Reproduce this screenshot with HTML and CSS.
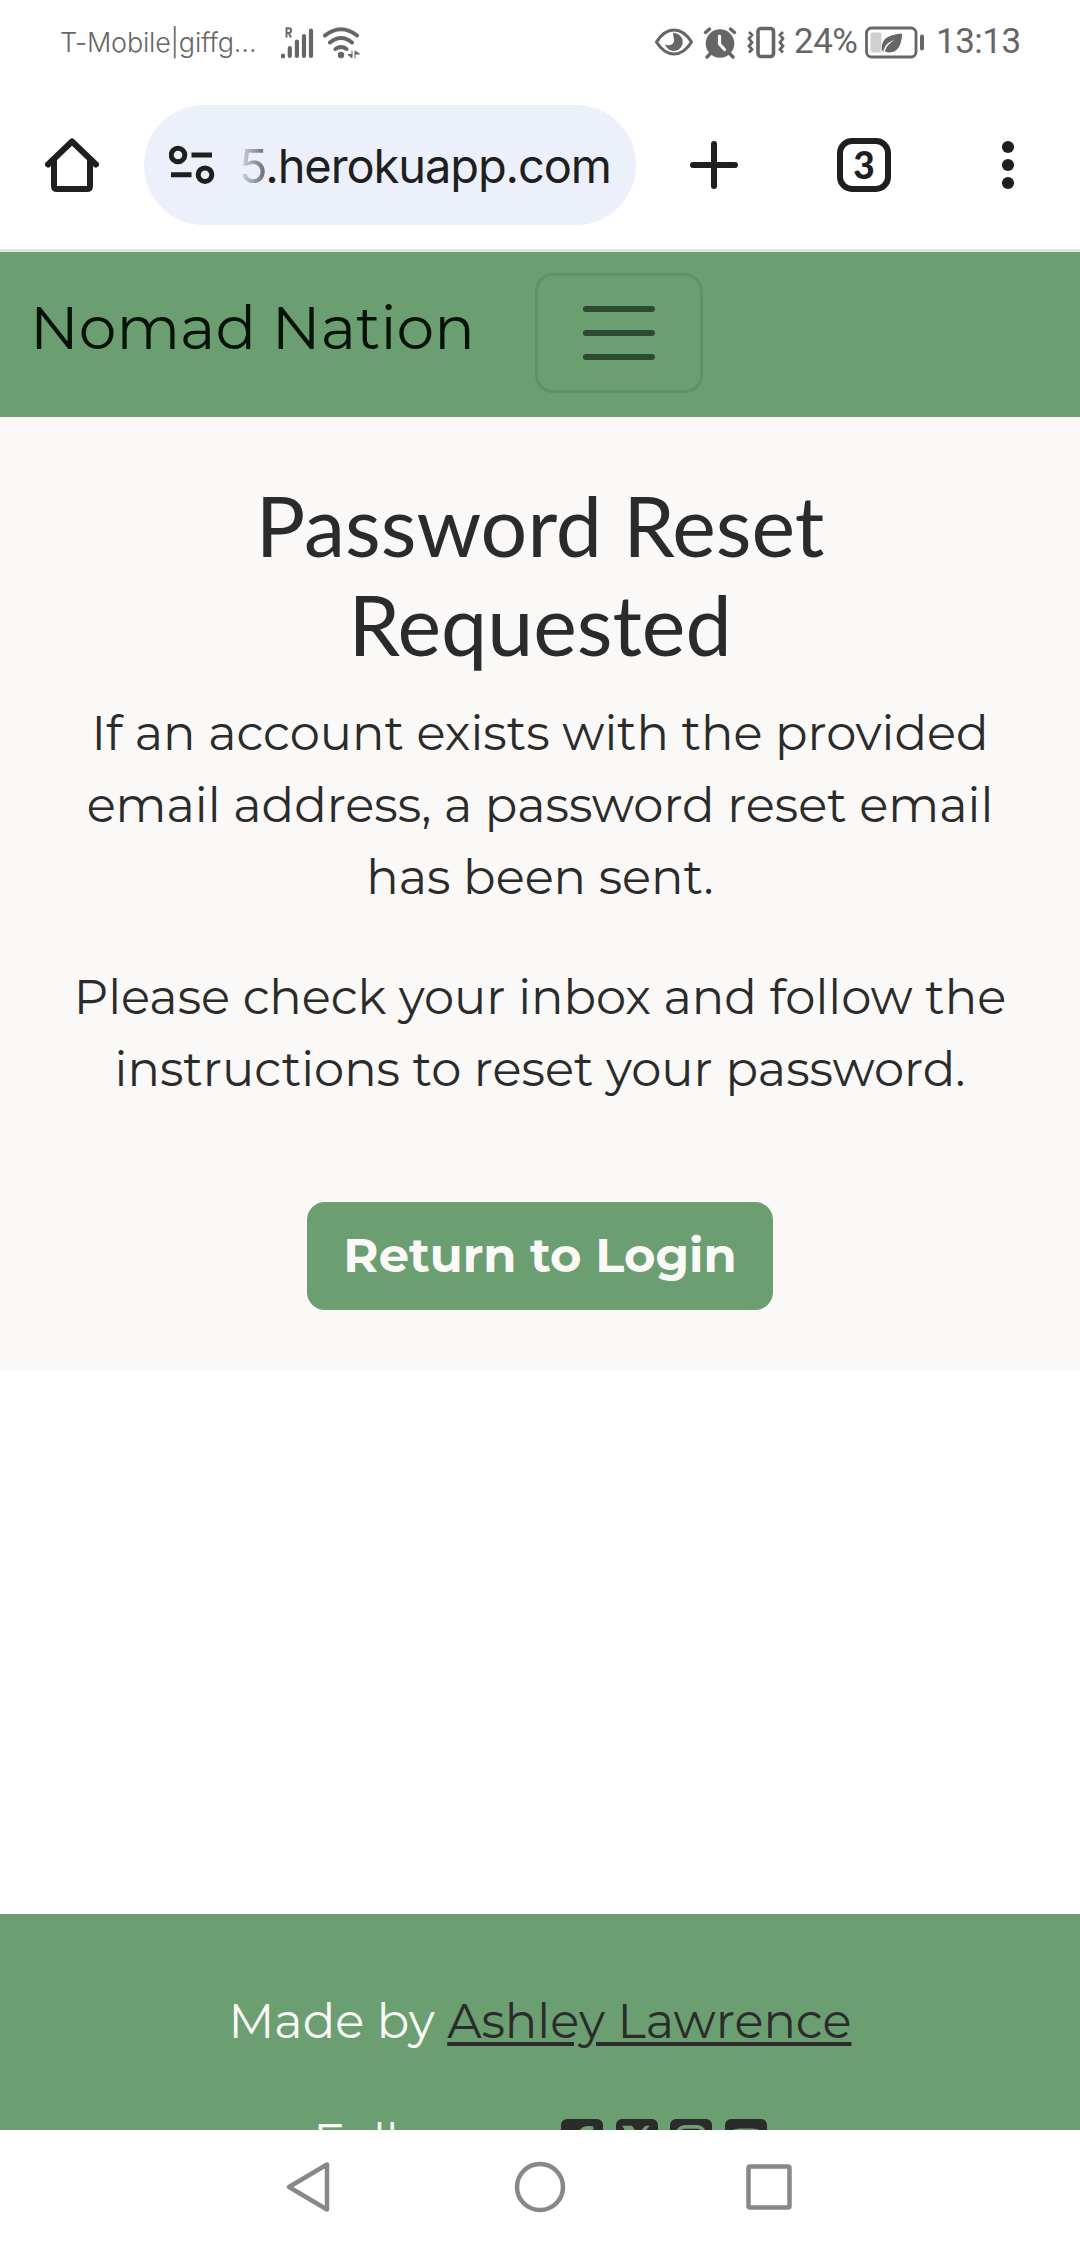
FILE: index.html
```
<!DOCTYPE html>
<html lang="en">
<head>
<meta charset="utf-8">
<title>Nomad Nation</title>
<link rel="stylesheet" href="styles.css">
</head>
<body>
<div class="phone">
  <div class="status">
    <span class="carrier">T-Mobile|giffg…</span>
    <svg class="signal" width="34" height="34" viewBox="0 0 34 34" fill="none" stroke="#666" stroke-linecap="round">
      <path d="M3 31.5v-1M9.800 31V23M16.900 31V16.500M24 31V11M31 31V5.500" stroke-width="4.200"/>
      <path d="M6.500 12.500V3.200H8.800a2.300 2.300 0 0 1 0 4.700H6.500M8.800 8l2.200 4.500" stroke-width="1.900" stroke-linecap="butt"/>
    </svg>
    <svg class="wifi" width="40" height="34" viewBox="0 0 40 34" fill="none" stroke="#666" stroke-width="4" stroke-linecap="round">
      <path d="M3 10.500Q19 -2 35 10.500M8 17.500Q19 8.500 30 17.500M13.500 24Q19 20 24.500 24"/>
      <circle cx="19" cy="30" r="3.200" fill="#666" stroke="none"/>
      <path d="M30 26v7l-4-3.500h4M33 33v-7l4.500 3H33" fill="#666" stroke-width="1"/>
    </svg>
    <span class="spring"></span>
    <svg class="eye" width="40" height="34" viewBox="0 0 40 34">
      <path d="M2.500 17Q10 5 20 5T37.500 17Q30 29 20 29T2.500 17z" fill="none" stroke="#666" stroke-width="3.200" stroke-linejoin="round"/>
      <path d="M19 8a9 9 0 1 1-8 11c2.500 2.500 8.500 1.500 9-3 .3-3-1-5-1-8z" fill="#666"/>
    </svg>
    <svg class="alarm" width="34" height="34" viewBox="0 0 34 34">
      <circle cx="17" cy="18.500" r="14.300" fill="#666"/>
      <path d="M2.500 7.500 6.500 4M31.500 7.500 27.500 4M7 29l-3 3M27 29l3 3" stroke="#666" stroke-width="3.400" stroke-linecap="round"/>
      <path d="M16.500 11v8l5 5.500" fill="none" stroke="#fff" stroke-width="3.200" stroke-linecap="round" stroke-linejoin="round"/>
    </svg>
    <svg class="vibrate" width="40" height="34" viewBox="0 0 40 34" fill="none" stroke="#666" stroke-width="3">
      <rect x="12" y="3.500" width="15.500" height="28" rx="3" stroke-width="3.600"/>
      <path d="M3 7l3 3-3 3.500 3 4-3 3.500 3 3.500-3 3M37 7l-3 3 3 3.500-3 4 3 3.500-3 3.500 3 3" stroke-width="2.800"/>
    </svg>
    <span class="pct">24%</span>
    <svg class="battery" width="60" height="34" viewBox="0 0 60 34">
      <rect x="1.500" y="3" width="49.500" height="29" rx="5" fill="none" stroke="#666" stroke-width="2.800"/>
      <rect x="5.500" y="7.500" width="11" height="20" rx="2" fill="#d0d0d0"/>
      <path d="M37 8.500C25 10 16 12 17 25l1.500 2C19 20 24 17 30 14.500 25 18 21 21 20 26.500 30 30 37 23 37 8.500z" fill="#666"/>
      <path d="M57 11.500v12" stroke="#666" stroke-width="4" stroke-linecap="round"/>
    </svg>
    <span class="clock">13:13</span>
  </div>

  <div class="browser">
    <svg class="home" width="56" height="56" viewBox="0 0 56 56" fill="none" stroke="#1f1f1f" stroke-width="6" stroke-linecap="round" stroke-linejoin="round">
      <path d="M4 27.500 28 4.500 52 27.500"/>
      <path d="M10 24v25q0 3 3 3h30q3 0 3-3V24"/>
    </svg>
    <div class="address">
      <svg class="tune" width="46" height="40" viewBox="0 0 46 40" fill="none" stroke="#1f1f1f" stroke-width="5">
        <circle cx="9" cy="10" r="6.800"/><path d="M22.500 10H43M2 29.700H22.500"/><circle cx="36" cy="29.700" r="6.800"/>
      </svg>
      <span class="url"><span class="fade">5</span>.herokuapp.com</span>
    </div>
    <svg class="plus" width="50" height="50" viewBox="0 0 50 50" stroke="#1f1f1f" stroke-width="6" stroke-linecap="round"><path d="M25 4v42M4 25h42"/></svg>
    <div class="tabs">3</div>
    <svg class="dots" width="14" height="50" viewBox="0 0 14 50" fill="#1f1f1f"><circle cx="7" cy="7" r="6.100"/><circle cx="7" cy="25" r="6.100"/><circle cx="7" cy="43" r="6.100"/></svg>
  </div>

  <nav class="navbar">
    <span class="brand">Nomad Nation</span>
    <span class="toggler"><i></i><i></i><i></i></span>
  </nav>

  <main class="content">
    <h1>Password Reset<br>Requested</h1>
    <p>If an account exists with the provided<br>email address, a password reset email<br>has been sent.</p>
    <p>Please check your inbox and follow the<br>instructions to reset your password.</p>
    <a class="button">Return to Login</a>
  </main>

  <footer class="footer">
    <p>Made by <a class="author">Ashley Lawrence</a></p>
    <div class="follow">
      <span class="label">Follow us:</span>
      <svg viewBox="0 0 448 512"><rect y="32" width="448" height="448" rx="64"/><path class="cut" d="M182 480V334h-55v-66h55v-48c0-72 44-113 110-113 20 0 42 3 54 6v58h-35c-34 0-47 20-47 44v53h78l-13 66h-65v146z"/></svg>
      <svg viewBox="0 0 448 512"><rect y="32" width="448" height="448" rx="64"/><path class="cut" d="M64 105h106l66 88 77-88h48L258 222l124 185H276l-73-97-85 97H71l110-126z"/></svg>
      <svg viewBox="0 0 448 512"><rect y="32" width="448" height="448" rx="64"/><rect class="line" x="84" y="116" width="280" height="280" rx="72"/><circle class="line" cx="224" cy="256" r="58"/></svg>
      <svg viewBox="0 0 448 512"><rect y="32" width="448" height="448" rx="64"/><path class="cut" d="M224 134c150 0 174 4 174 122s-24 122-174 122S50 374 50 256s24-122 174-122z"/><path d="M187 202l95 54-95 54z"/></svg>
    </div>
  </footer>

  <div class="system">
    <svg width="48" height="56" viewBox="0 0 48 56"><path d="M42 5.500v45L4 28z"/></svg>
    <svg width="56" height="56" viewBox="0 0 56 56"><circle cx="28" cy="28" r="23"/></svg>
    <svg width="50" height="56" viewBox="0 0 50 56"><rect x="4.500" y="7.500" width="41" height="41" rx="1.500"/></svg>
  </div>
</div>
</body>
</html>
```
FILE: styles.css
```
* { box-sizing: border-box; margin: 0; padding: 0; }
body { background: #fff; }
svg { display: block; flex: none; }

.phone {
  display: flex;
  flex-direction: column;
  width: 1080px;
  height: 2244px;
  overflow: hidden;
  font-family: Montserrat, Inter, "Open Sans", sans-serif;
  font-size: 48px;
  font-weight: 400;
  line-height: 72px;
  color: #2b2b2b;
}

/* Status bar */
.status {
  display: flex;
  align-items: center;
  height: 84px;
  padding: 0 59px 1px 60px;
  line-height: 40px;
  color: #666;
}
.carrier { width: 220px; font-family: Inter, sans-serif; font-size: 27px; font-weight: 300; letter-spacing: -0.2px; padding-top: 2px; white-space: nowrap; }
.wifi { margin-left: 8px; }
.spring { flex: 1; }
.alarm { margin-left: 9px; }
.vibrate { margin-left: 9px; }
.pct, .clock { font-family: Roboto, sans-serif; font-size: 35px; font-weight: 400; white-space: nowrap; }
.pct { width: 74px; padding-left: 8px; letter-spacing: -0.5px; }
.battery { margin-left: 5px; }
.clock { width: 85px; margin-left: 11px; letter-spacing: -0.5px; }

/* Browser toolbar */
.browser {
  display: flex;
  align-items: center;
  height: 168px;
  padding: 0 65px 4px 44px;
  border-bottom: 3px solid #dfe1dc;
  color: #1f1f1f;
}
.address {
  display: flex;
  align-items: center;
  width: 492px;
  height: 120px;
  margin-left: 44px;
  padding-left: 25px;
  border-radius: 60px;
  background: #ecf0fa;
}
.url { margin-left: 24px; padding-top: 3px; font-family: Inter, sans-serif; font-size: 47px; font-weight: 400; letter-spacing: -1.1px; white-space: nowrap; }
.fade { background: linear-gradient(90deg, #d9dde6, #6b6d72); -webkit-background-clip: text; background-clip: text; color: transparent; }
.plus { margin-left: 53px; }
.tabs {
  width: 54px;
  height: 54px;
  margin-left: 98px;
  border: 6px solid #1f1f1f;
  border-radius: 15px;
  font-family: Lato, sans-serif;
  font-size: 37px;
  font-weight: 900;
  line-height: 42px;
  text-align: center;
}
.dots { margin-left: 110px; }

/* Site header */
.navbar { display: flex; align-items: center; height: 165px; padding-left: 30px; background: #6b9f71; }
.brand { margin-bottom: 13px; width: 505px; font-size: 60px; color: #051208; white-space: nowrap; }
.toggler {
  display: flex;
  flex-direction: column;
  align-items: center;
  justify-content: center;
  gap: 18px;
  width: 168px;
  height: 120px;
  margin-bottom: 3px;
  border: 3px solid #619266;
  border-radius: 18px;
}
.toggler i { width: 72px; height: 6px; border-radius: 3px; background: #2f4a32; }

/* Message */
.content { height: 953px; padding-top: 59px; background: #faf9f7; text-align: center; }
h1 { margin-bottom: 23px; font: 400 82.500px/99px Lato, sans-serif; }
.content p { margin-bottom: 48px; }
.button {
  display: inline-block;
  width: 466px;
  height: 108px;
  margin-top: 49px;
  border-radius: 18px;
  background: #6b9f71;
  color: #faf9f7;
  font-weight: 700;
  line-height: 106px;
  white-space: nowrap;
}

/* Footer */
.footer { height: 216px; margin-top: 544px; padding-top: 71px; overflow: hidden; background: #6b9f71; color: #faf9f7; text-align: center; }
.author { color: #2b2b2b; text-decoration: underline; text-decoration-thickness: 4px; text-underline-offset: 4px; }
.follow { display: flex; justify-content: center; gap: 12.500px; margin-top: 48px; }
.follow svg { width: 42px; height: 48px; margin-top: 11px; fill: #2b2b2b; }
.follow .cut { fill: #6b9f71; }
.follow .line { fill: none; stroke: #6b9f71; stroke-width: 40; }

/* System navigation */
.system { display: flex; align-items: center; height: 114px; padding-left: 285px; }
.system svg { fill: none; stroke: #888; stroke-width: 4.500; stroke-linejoin: round; }
.system svg:nth-child(2) { margin-left: 179px; }
.system svg:nth-child(3) { margin-left: 176px; }
```
